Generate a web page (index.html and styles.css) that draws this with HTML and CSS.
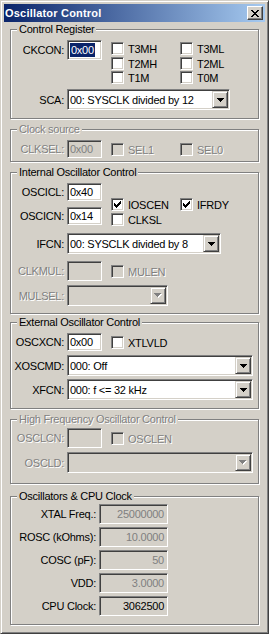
FILE: index.html
```html
<!DOCTYPE html>
<html lang="en">
<head>
    <meta charset="UTF-8">
    <title>Oscillator Control</title>
    <link rel="stylesheet" href="styles.css">
</head>
<body>
    <div class="window">
        <div class="titlebar">
            <span class="title">Oscillator Control</span>
            <span class="close-btn">
                <svg width="8" height="7" viewBox="0 0 8 7"><path d="M0 0h2v1h-2zM6 0h2v1h-2zM1 1h2v1h-2zM5 1h2v1h-2zM2 2h4v1h-4zM3 3h2v1h-2zM2 4h4v1h-4zM1 5h2v1h-2zM5 5h2v1h-2zM0 6h2v1h-2zM6 6h2v1h-2z" fill="#000"/></svg>
            </span>
        </div>

        <div class="client">
            <!-- Control Register -->
            <fieldset class="group g-reg">
                <legend>Control Register</legend>
                <div class="reg-top">
                    <div class="field">
                        <span class="lbl">CKCON:</span>
                        <span class="edit edit-tall"><span class="hilite">0x00</span></span>
                    </div>
                    <div class="checks checks-reg">
                        <span class="check"><i class="box"></i>T3MH</span>
                        <span class="check"><i class="box"></i>T3ML</span>
                        <span class="check"><i class="box"></i>T2MH</span>
                        <span class="check"><i class="box"></i>T2ML</span>
                        <span class="check"><i class="box"></i>T1M</span>
                        <span class="check"><i class="box"></i>T0M</span>
                    </div>
                </div>
                <div class="field sca-row">
                    <span class="lbl">SCA:</span>
                    <span class="combo combo-sca">
                        <span class="combo-text">00: SYSCLK divided by 12</span>
                        <span class="combo-btn"><svg width="7" height="4" viewBox="0 0 7 4"><path d="M0 0h7v1h-7zM1 1h5v1h-5zM2 2h3v1h-3zM3 3h1v1h-1z" fill="#000"/></svg></span>
                    </span>
                </div>
            </fieldset>

            <!-- Clock source (disabled) -->
            <fieldset class="group g-clk disabled">
                <legend>Clock source</legend>
                <div class="row">
                    <div class="field">
                        <span class="lbl">CLKSEL:</span>
                        <span class="edit edit-off">0x00</span>
                    </div>
                    <div class="checks checks-clk">
                        <span class="check"><i class="box box-off"></i>SEL1</span>
                        <span class="check"><i class="box box-off"></i>SEL0</span>
                    </div>
                </div>
            </fieldset>

            <!-- Internal Oscillator Control -->
            <fieldset class="group g-int">
                <legend>Internal Oscillator Control</legend>
                <div class="row">
                    <div class="int-fields">
                        <div class="field">
                            <span class="lbl">OSCICL:</span>
                            <span class="edit">0x40</span>
                        </div>
                        <div class="field oscicn-row">
                            <span class="lbl">OSCICN:</span>
                            <span class="edit">0x14</span>
                        </div>
                    </div>
                    <div class="checks checks-int">
                        <span class="check"><i class="box"><svg width="7" height="7" viewBox="0 0 7 7"><path d="M6 0h1v1h-1zM5 1h2v1h-2zM0 2h1v1h-1zM4 2h3v1h-3zM0 3h2v1h-2zM3 3h3v1h-3zM0 4h5v1h-5zM1 5h3v1h-3zM2 6h1v1h-1z" fill="#000"/></svg></i>IOSCEN</span>
                        <span class="check"><i class="box"><svg width="7" height="7" viewBox="0 0 7 7"><path d="M6 0h1v1h-1zM5 1h2v1h-2zM0 2h1v1h-1zM4 2h3v1h-3zM0 3h2v1h-2zM3 3h3v1h-3zM0 4h5v1h-5zM1 5h3v1h-3zM2 6h1v1h-1z" fill="#000"/></svg></i>IFRDY</span>
                        <span class="check"><i class="box"></i>CLKSL</span>
                    </div>
                </div>
                <div class="field ifcn-row">
                    <span class="lbl">IFCN:</span>
                    <span class="combo combo-ifcn">
                        <span class="combo-text">00: SYSCLK divided by 8</span>
                        <span class="combo-btn"><svg width="7" height="4" viewBox="0 0 7 4"><path d="M0 0h7v1h-7zM1 1h5v1h-5zM2 2h3v1h-3zM3 3h1v1h-1z" fill="#000"/></svg></span>
                    </span>
                </div>
                <div class="row clkmul-row disabled">
                    <div class="field">
                        <span class="lbl">CLKMUL:</span>
                        <span class="edit edit-off edit-tall"></span>
                    </div>
                    <div class="checks checks-one">
                        <span class="check"><i class="box box-off"></i>MULEN</span>
                    </div>
                </div>
                <div class="field mulsel-row disabled">
                    <span class="lbl">MULSEL:</span>
                    <span class="combo combo-off combo-mulsel">
                        <span class="combo-text"></span>
                        <span class="combo-btn"><svg width="8" height="5" viewBox="0 0 8 5"><path d="M1 1h7v1h-7zM2 2h5v1h-5zM3 3h3v1h-3zM4 4h1v1h-1z" fill="#fff"/><path d="M0 0h7v1h-7zM1 1h5v1h-5zM2 2h3v1h-3zM3 3h1v1h-1z" fill="#808080"/></svg></span>
                    </span>
                </div>
            </fieldset>

            <!-- External Oscillator Control -->
            <fieldset class="group g-ext">
                <legend>External Oscillator Control</legend>
                <div class="row">
                    <div class="field">
                        <span class="lbl">OSCXCN:</span>
                        <span class="edit">0x00</span>
                    </div>
                    <div class="checks checks-one checks-ext">
                        <span class="check"><i class="box"></i>XTLVLD</span>
                    </div>
                </div>
                <div class="field xoscmd-row">
                    <span class="lbl">XOSCMD:</span>
                    <span class="combo combo-wide">
                        <span class="combo-text">000: Off</span>
                        <span class="combo-btn"><svg width="7" height="4" viewBox="0 0 7 4"><path d="M0 0h7v1h-7zM1 1h5v1h-5zM2 2h3v1h-3zM3 3h1v1h-1z" fill="#000"/></svg></span>
                    </span>
                </div>
                <div class="field xfcn-row">
                    <span class="lbl">XFCN:</span>
                    <span class="combo combo-wide">
                        <span class="combo-text">000: f &lt;= 32 kHz</span>
                        <span class="combo-btn"><svg width="7" height="4" viewBox="0 0 7 4"><path d="M0 0h7v1h-7zM1 1h5v1h-5zM2 2h3v1h-3zM3 3h1v1h-1z" fill="#000"/></svg></span>
                    </span>
                </div>
            </fieldset>

            <!-- High Frequency Oscillator Control (disabled) -->
            <fieldset class="group g-hf disabled">
                <legend>High Frequency Oscillator Control</legend>
                <div class="row">
                    <div class="field">
                        <span class="lbl">OSCLCN:</span>
                        <span class="edit edit-off edit-tall"></span>
                    </div>
                    <div class="checks checks-one checks-hf">
                        <span class="check"><i class="box box-off"></i>OSCLEN</span>
                    </div>
                </div>
                <div class="field oscld-row">
                    <span class="lbl">OSCLD:</span>
                    <span class="combo combo-off combo-wide">
                        <span class="combo-text"></span>
                        <span class="combo-btn"><svg width="8" height="5" viewBox="0 0 8 5"><path d="M1 1h7v1h-7zM2 2h5v1h-5zM3 3h3v1h-3zM4 4h1v1h-1z" fill="#fff"/><path d="M0 0h7v1h-7zM1 1h5v1h-5zM2 2h3v1h-3zM3 3h1v1h-1z" fill="#808080"/></svg></span>
                    </span>
                </div>
            </fieldset>

            <!-- Oscillators & CPU Clock -->
            <fieldset class="group g-cpu">
                <legend>Oscillators &amp; CPU Clock</legend>
                <div class="field cpu-row">
                    <span class="lbl lbl-wide">XTAL Freq.:</span>
                    <span class="edit edit-num">25000000</span>
                </div>
                <div class="field cpu-row">
                    <span class="lbl lbl-wide">ROSC (kOhms):</span>
                    <span class="edit edit-num">10.0000</span>
                </div>
                <div class="field cpu-row">
                    <span class="lbl lbl-wide">COSC (pF):</span>
                    <span class="edit edit-num">50</span>
                </div>
                <div class="field cpu-row">
                    <span class="lbl lbl-wide">VDD:</span>
                    <span class="edit edit-num">3.0000</span>
                </div>
                <div class="field cpu-row">
                    <span class="lbl lbl-wide">CPU Clock:</span>
                    <span class="edit edit-num edit-result">3062500</span>
                </div>
            </fieldset>
        </div>
    </div>
</body>
</html>
```

FILE: styles.css
```css
* {
    box-sizing: border-box;
}
body {
    margin: 0;
    font-family: "Liberation Sans", Arial, sans-serif;
    font-size: 11px;
    letter-spacing: -0.25px;
    color: #000;
    background: #d4d0c8;
}
.window {
    width: 269px;
    height: 634px;
    padding: 3px;
    background: #d4d0c8;
    border: 1px solid;
    border-color: #d4d0c8 #404040 #404040 #d4d0c8;
    box-shadow: inset 1px 1px #fff, inset -1px -1px #808080;
}
.titlebar {
    height: 18px;
    display: flex;
    align-items: center;
    justify-content: space-between;
    padding: 0 2px 0 1px;
    background: linear-gradient(to right, #0a246a, #a6caf0);
    color: #fff;
    font-weight: bold;
    letter-spacing: 0.2px;
}
.close-btn {
    width: 16px;
    height: 14px;
    display: flex;
    align-items: center;
    justify-content: center;
    background: #d4d0c8;
    border: 1px solid;
    border-color: #fff #404040 #404040 #fff;
    box-shadow: inset -1px -1px #808080;
}
.client {
    padding: 0 6px;
}

/* group boxes */
.group {
    width: 249px;
    margin: 4px 0 0;
    padding: 0 0 8px;
    min-width: 0;
    border: 1px solid #808080;
    box-shadow: inset 1px 1px #fff, 1px 1px #fff;
}
.group legend {
    margin-left: 6px;
    padding: 0 2px;
    line-height: 13px;
    background: #d4d0c8;
}
.g-reg { margin-top: 1px; }
.g-clk { padding-bottom: 3px; }
.g-int { padding-bottom: 7px; }
.g-ext { margin-top: 2px; }
.g-hf { padding-bottom: 10px; }
.g-cpu { margin-top: 6px; }

.disabled,
.disabled legend {
    color: #808080;
    text-shadow: 1px 1px #fff;
}

/* rows */
.row,
.reg-top {
    display: flex;
    align-items: flex-start;
    padding-top: 4px;
}
.field {
    display: flex;
    align-items: center;
}
.lbl {
    width: 53px;
    margin-right: 3px;
    text-align: right;
    white-space: nowrap;
}
.lbl-wide {
    width: 85px;
}
.sca-row { margin-top: 5px; }
.oscicn-row { margin-top: 6px; }
.ifcn-row { margin-top: 7px; }
.clkmul-row { padding-top: 7px; }
.mulsel-row { margin-top: 4px; }
.xoscmd-row { margin-top: 4px; }
.xfcn-row { margin-top: 3px; }
.oscld-row { margin-top: 4px; }
.g-hf .row { padding-top: 2px; }
.cpu-row { margin-top: 3px; }
.cpu-row:first-of-type { margin-top: 1px; }

/* edit boxes */
.edit {
    width: 35px;
    height: 18px;
    display: flex;
    align-items: center;
    padding: 0 2px;
    background: #fff;
    border: 1px solid;
    border-color: #808080 #fff #fff #808080;
    box-shadow: inset 1px 1px #404040, inset -1px -1px #d4d0c8;
    text-shadow: none;
}
.edit-tall {
    height: 20px;
}
.edit-off {
    background: #d4d0c8;
    color: #808080;
}
.hilite {
    padding: 0 1px;
    line-height: 14px;
    background: #0a246a;
    color: #fff;
}
.edit-num {
    width: 69px;
    height: 20px;
    justify-content: flex-end;
    padding-right: 3px;
    background: #d4d0c8;
    color: #808080;
}
.edit-result {
    color: #000;
}

/* combo boxes */
.combo {
    height: 21px;
    display: flex;
    padding: 1px;
    background: #fff;
    border: 1px solid;
    border-color: #808080 #fff #fff #808080;
    box-shadow: inset 1px 1px #404040, inset -1px -1px #d4d0c8;
}
.combo-text {
    flex: 1;
    display: flex;
    align-items: center;
    padding-left: 1px;
    white-space: nowrap;
    overflow: hidden;
}
.combo-btn {
    width: 16px;
    display: flex;
    align-items: center;
    justify-content: center;
    background: #d4d0c8;
    border: 1px solid;
    border-color: #d4d0c8 #404040 #404040 #d4d0c8;
    box-shadow: inset 1px 1px #fff, inset -1px -1px #808080;
}
.combo-off {
    background: #d4d0c8;
}
.combo-sca { width: 163px; }
.combo-ifcn { width: 154px; }
.combo-mulsel { width: 101px; }
.combo-wide { width: 186px; }

/* check boxes */
.checks {
    display: grid;
    grid-template-columns: 69px auto;
    margin-left: 9px;
}
.checks-reg {
    grid-template-rows: 15px 14px 13px;
    margin-top: 2px;
}
.checks-clk { margin-top: 3px; }
.checks-int {
    grid-template-rows: 15px 13px;
    margin-top: 15px;
}
.checks-one { margin-top: 4px; }
.checks-ext { margin-top: 3px; }
.checks-hf { margin-top: 4px; }
.check {
    display: flex;
    align-items: center;
    gap: 4px;
    height: 13px;
    white-space: nowrap;
}
.box {
    width: 13px;
    height: 13px;
    flex: none;
    padding: 2px 0 0 2px;
    background: #fff;
    border: 1px solid;
    border-color: #808080 #fff #fff #808080;
    box-shadow: inset 1px 1px #404040, inset -1px -1px #d4d0c8;
}
.box svg {
    display: block;
}
.box-off {
    background: #d4d0c8;
}
```
